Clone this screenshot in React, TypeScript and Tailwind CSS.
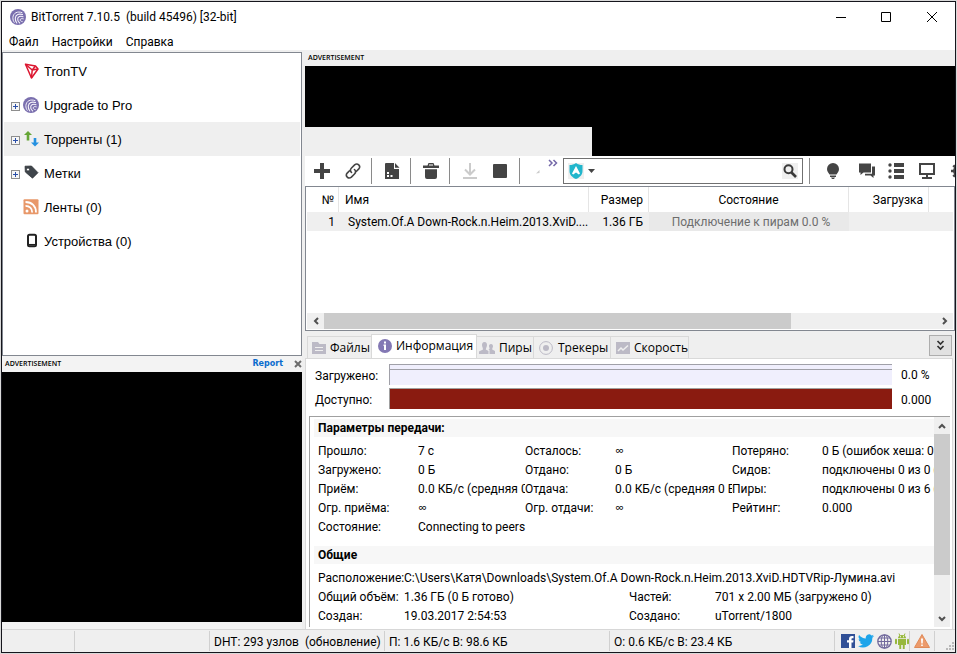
import { ReactNode } from 'react';

const treeItems = [
  { label: 'TronTV', icon: <TronIcon />, expandable: false, active: false },
  { label: 'Upgrade to Pro', icon: <BitTorrentIcon />, expandable: true, active: false },
  { label: 'Торренты (1)', icon: <TransferIcon />, expandable: true, active: true },
  { label: 'Метки', icon: <TagIcon />, expandable: true, active: false },
  { label: 'Ленты (0)', icon: <FeedIcon />, expandable: false, active: false },
  { label: 'Устройства (0)', icon: <DeviceIcon />, expandable: false, active: false },
];

const transferRows = [
  ['Прошло:', '7 с', 'Осталось:', '∞', 'Потеряно:', '0 Б (ошибок хеша: 0'],
  ['Загружено:', '0 Б', 'Отдано:', '0 Б', 'Сидов:', 'подключены 0 из 0 ('],
  ['Приём:', '0.0 КБ/с (средняя 0', 'Отдача:', '0.0 КБ/с (средняя 0 Б/', 'Пиры:', 'подключены 0 из 6 ('],
  ['Огр. приёма:', '∞', 'Огр. отдачи:', '∞', 'Рейтинг:', '0.000'],
];

function BitTorrentIcon() {
  return (
    <svg className="w-4 h-4 shrink-0" viewBox="0 0 16 16" fill="none">
      <circle cx="8" cy="8" r="8" fill="#7a6fae" />
      <g stroke="#f4f2fa" strokeLinecap="round">
        <path d="M12 3.600C7.500 1.800 3.200 4 2.900 8.500c-.1 2 .4 3.500 1.300 4.800" strokeWidth="1" />
        <path d="M12.500 5.600C9 4.300 5.700 5.700 5.300 9c-.2 2 .4 3.700 1.500 5" strokeWidth="1.100" />
        <path d="M13 7.700c-2.500-.9-5-.1-5.300 2.100-.2 1.700.6 3.200 2 4.200" strokeWidth="1.100" />
        <path d="M13.300 9.800c-1.700-.5-3-.1-3.100 1-.1 1 .8 1.700 2 1.800" strokeWidth="1" />
      </g>
    </svg>
  );
}

function TronIcon() {
  return (
    <svg className="w-4 h-4 shrink-0" viewBox="0 0 16 16" fill="none" stroke="#dc1630" strokeWidth="1.500" strokeLinejoin="round">
      <path d="M2.500 1.200 12.500 3 15 6 8.500 15Z" />
      <path d="M2.500 1.200 9.200 7 8.500 15M9.200 7 15 6M9.200 7 12.500 3" />
    </svg>
  );
}

function TransferIcon() {
  return (
    <svg className="w-4 h-4 shrink-0" viewBox="0 0 16 16">
      <path d="M5 0 9 4H6.300V9.500H3.700V4H1Z" fill="#66a636" />
      <path d="M12 15.500 8 11.500h2.700V7h2.600v4.500H16Z" fill="#2490e0" />
    </svg>
  );
}

function TagIcon() {
  return (
    <svg className="w-4 h-4 shrink-0" viewBox="0 0 16 16">
      <path fillRule="evenodd" d="M2 1.200 8.500 1l6.500 6.700-5.500 5.500L2.300 7ZM5 3a1.500 1.500 0 1 0 0 3 1.500 1.500 0 0 0 0-3Z" fill="#3f454b" stroke="#2b2f33" strokeWidth=".7" />
    </svg>
  );
}

function FeedIcon() {
  return (
    <svg className="w-4 h-4 shrink-0" viewBox="0 0 16 16" fill="none" stroke="#fff" strokeWidth="1.800">
      <rect x=".5" y=".3" width="15" height="15" rx="1" fill="#e8986a" stroke="none" />
      <circle cx="4" cy="12" r="1.500" fill="#fff" stroke="none" />
      <path d="M2.500 6.800c4 0 6.700 2.700 6.700 6.700M2.500 3c6.500 0 10.500 4 10.500 10.500" />
    </svg>
  );
}

function DeviceIcon() {
  return (
    <svg className="w-4 h-4 shrink-0" viewBox="0 0 16 16" fill="none">
      <rect x="5" y="1.800" width="8" height="11.400" rx="1.500" stroke="#222" strokeWidth="2" />
      <path d="M6 11.700h6" stroke="#222" strokeWidth="1.500" />
    </svg>
  );
}

function Expander() {
  return (
    <svg className="w-[9px] h-[9px]" viewBox="0 0 9 9" fill="none">
      <rect x=".5" y=".5" width="8" height="8" fill="#f6f6f6" stroke="#8e8e8e" />
      <path d="M2 4.500h5M4.500 2v5" stroke="#2b4fa8" />
    </svg>
  );
}

function ToolButton({ title, className, children }: { title: string; className: string; children: ReactNode }) {
  return (
    <button type="button" title={title} className={`flex h-full shrink-0 items-center justify-center ${className}`}>
      {children}
    </button>
  );
}

function Divider() {
  return <div className="h-[26px] w-px shrink-0 bg-[#8a8a8a]" />;
}

function Chevron({ d }: { d: string }) {
  return (
    <svg className="w-2 h-2" viewBox="0 0 8 8" fill="none" stroke="#505050" strokeWidth="2">
      <path d={d} />
    </svg>
  );
}

function Toolbar() {
  return (
    <div className="flex h-[30px] shrink-0 items-center overflow-hidden bg-white pl-px">
      <ToolButton title="Добавить торрент" className="w-8">
        <svg className="w-4 h-4" viewBox="0 0 16 16" stroke="#444" strokeWidth="4"><path d="M8 0v16M0 8h16" /></svg>
      </ToolButton>
      <ToolButton title="Добавить по ссылке" className="w-8 pr-[2px]">
        <svg className="w-4 h-4" viewBox="0 0 16 16" fill="none" stroke="#444" strokeWidth="1.600" strokeLinecap="round">
          <path d="M6.500 9.500C5 8 5.200 6.300 6.500 5L9.600 1.900c3-2.500 6.600 1.200 4.200 4L11.500 8.200" />
          <path d="M9.500 6.500C11 8 10.800 9.700 9.500 11l-3.100 3.100c-3 2.500-6.600-1.200-4.200-4L4.500 7.800" />
        </svg>
      </ToolButton>
      <div className="ml-px"><Divider /></div>
      <ToolButton title="Создать торрент" className="w-[38px] pl-[2px]">
        <svg className="w-4 h-4" viewBox="0 0 16 16">
          <path d="M2 0h8v6h5v10H1V1a1 1 0 0 1 1-1Z" fill="#444" />
          <path d="M11 0 15.500 4.800H11Z" fill="#444" />
          <path d="M3 9h2v2H3zM3 12h2v2H3zM6.500 12h2v2h-2z" fill="#fff" />
        </svg>
      </ToolButton>
      <Divider />
      <ToolButton title="Удалить" className="w-[38px] pl-[2px]">
        <svg className="w-4 h-4" viewBox="0 0 16 16" fill="#444">
          <path d="M0 2.500h4.500L5.500 0h5l1 2.500H16V5H0ZM6 1.500v1h4v-1ZM2 6.300h12V14a2 2 0 0 1-2 2H4a2 2 0 0 1-2-2Z" fillRule="evenodd" />
        </svg>
      </ToolButton>
      <Divider />
      <ToolButton title="Запустить" className="w-10">
        <svg className="w-4 h-4" viewBox="0 0 16 16" fill="none" stroke="#cbcbcb" strokeWidth="2"><path d="M8 0v11M3 6.500l5 5 5-5M1 15h14" /></svg>
      </ToolButton>
      <ToolButton title="Остановить" className="w-[29px] pr-[10px]">
        <svg className="w-[14px] h-[14px]" viewBox="0 0 14 14"><rect width="14" height="14" rx="1" fill="#444" /></svg>
      </ToolButton>
      <Divider />
      <ToolButton title="Ещё" className="w-[43px]">
        <svg className="w-[43px] h-[30px]" viewBox="0 0 43 30" fill="none">
          <path d="M16 17.500 19.500 14v3Z" fill="#cbcbcb" />
          <path d="m29 4 3 3-3 3M33.500 4l3 3-3 3" stroke="#7468a8" strokeWidth="1.500" />
        </svg>
      </ToolButton>
      <div className="flex h-[26px] min-w-0 flex-1 items-center border border-[#707070] pl-1 pr-1">
        <button type="button" title="Поисковая система" className="flex h-4 items-center gap-1">
          <svg className="w-4 h-4" viewBox="0 0 16 16">
            <path d="M0 0h16v16H0z" fill="#efefef" />
            <path d="M8 0c2 1.400 4 2 6.500 2v6c0 4-3 6.500-6.500 8-3.500-1.500-6.500-4-6.500-8V2C4 2 6 1.400 8 0Z" fill="#22b6cc" />
            <path d="m8 3 4 7.500-1.200 1L8 9.500l-2.800 2-1.200-1Z" fill="#fff" />
          </svg>
          <svg className="w-[7px] h-1" viewBox="0 0 7 4"><path d="M0 0h7L3.500 4Z" fill="#444" /></svg>
        </button>
        <input type="text" aria-label="Поиск" className="h-5 min-w-0 flex-1 px-2 text-[12px] outline-none" />
        <button type="button" title="Найти" className="flex h-4 w-4 shrink-0 items-center justify-center bg-[#efefef]">
          <svg className="w-[14px] h-[14px]" viewBox="0 0 14 14" fill="none" stroke="#3a3a3a">
            <circle cx="5.500" cy="5.200" r="4" strokeWidth="2" />
            <path d="m8.500 8.500 4.500 4.500" strokeWidth="2.600" />
          </svg>
        </button>
      </div>
      <div className="flex h-full w-[152px] shrink-0 items-center overflow-hidden pl-[6px]">
        <Divider />
        <div className="w-[7px] shrink-0" />
        <ToolButton title="Подсказка" className="w-[31px]">
          <svg className="w-3 h-4" viewBox="0 0 12 16" fill="#444">
            <path d="M6 0a6 6 0 0 1 6 6c0 2.500-1.500 3.500-2.500 5.500h-7C1.500 9.500 0 8.500 0 6a6 6 0 0 1 6-6ZM3 12.500h6V14H3zM4 14.500h4L7 16H5Z" />
          </svg>
        </ToolButton>
        <ToolButton title="Чат" className="w-8 pl-[5px]">
          <svg className="w-4 h-4" viewBox="0 0 16 16" fill="#444">
            <path d="M0 .5h12v9H4.500L1.500 12V9.500H0Z" />
            <path d="M13 3.500h3v9h-1.500V15l-3-2.500H6V10.700h7Z" />
          </svg>
        </ToolButton>
        <ToolButton title="Список" className="w-[31px]">
          <svg className="w-4 h-4" viewBox="0 0 16 16" fill="#444">
            <path d="M6 0h10v4H6zM6 6h10v4H6zM6 12h10v4H6z" />
            <circle cx="2" cy="2" r="1.700" /><circle cx="2" cy="8" r="1.700" /><circle cx="2" cy="14" r="1.700" />
          </svg>
        </ToolButton>
        <ToolButton title="Удалённый доступ" className="w-[31px]">
          <svg className="w-4 h-4" viewBox="0 0 16 16" fill="none" stroke="#444" strokeWidth="2">
            <path d="M1 1h14v10H1z" /><path d="M3 15h10M8 11v4" />
          </svg>
        </ToolButton>
        <ToolButton title="Настройки" className="w-[31px] pl-[3px]">
          <svg className="w-4 h-4" viewBox="0 0 16 16" fill="none" stroke="#444">
            <circle cx="8" cy="8" r="4.500" strokeWidth="3" />
            <path d="M8 0v3M8 13v3M0 8h3M13 8h3M2.300 2.300l2 2M11.700 11.700l2 2M2.300 13.700l2-2M11.700 4.300l2-2" strokeWidth="2.500" />
          </svg>
        </ToolButton>
      </div>
    </div>
  );
}

function TorrentList() {
  return (
    <div className="flex min-h-0 flex-1 flex-col border border-[#828790] bg-white p-px pt-0">
      <table className="w-full table-fixed border-separate border-spacing-0 text-[12px] leading-[16px]">
        <colgroup>
          <col className="w-8" />
          <col className="w-[250px]" />
          <col className="w-[60px]" />
          <col className="w-[200px]" />
          <col className="w-20" />
          <col />
        </colgroup>
        <thead>
          <tr className="h-[25px]">
            <th className="border-r border-[#e5e5e5] pr-1 text-right font-normal">№</th>
            <th className="border-r border-[#e5e5e5] pl-[6px] text-left font-normal">Имя</th>
            <th className="border-r border-[#e5e5e5] pr-[5px] text-right font-normal">Размер</th>
            <th className="border-r border-[#e5e5e5] text-center font-normal">Состояние</th>
            <th className="border-r border-[#e5e5e5] pr-[5px] text-right font-normal">Загрузка</th>
            <th />
          </tr>
        </thead>
        <tbody>
          <tr className="h-[19px] bg-[#efefef]">
            <td className="pr-1 text-right">1</td>
            <td className="whitespace-nowrap pl-[9px]">System.Of.A Down-Rock.n.Heim.2013.XviD....</td>
            <td className="whitespace-nowrap pr-[6px] text-right">1.36 ГБ</td>
            <td className="bg-[#e9e9e9] pl-1 text-center text-[#6d6d6d]">Подключение к пирам 0.0 %</td>
            <td />
            <td />
          </tr>
        </tbody>
      </table>
      <div className="mt-auto flex h-4 shrink-0 items-center bg-[#efefef]">
        <div className="flex w-[17px] justify-center"><Chevron d="M6 1 3 4l3 3" /></div>
        <div className="h-full w-[467px] bg-[#cbcbcb]" />
        <div className="ml-auto flex w-[17px] justify-center"><Chevron d="M2 1l3 3-3 3" /></div>
      </div>
    </div>
  );
}

function Tab({ label, icon, selected, className }: { label: string; icon: ReactNode; selected?: boolean; className: string }) {
  return (
    <button type="button" role="tab" aria-selected={!!selected} className={`flex items-center whitespace-nowrap border-[#d9d9d9] font-['Open_Sans',sans-serif] text-[12px] leading-[16px] ${className}`}>
      {icon}
      {label}
    </button>
  );
}

function Tabs() {
  return (
    <div className="flex h-[27px] shrink-0 items-end pl-[2px] pr-[3px]">
      <div role="tablist" className="flex flex-1 items-end">
        <Tab
          label="Файлы"
          className="h-[22px] w-[64px] gap-[4px] border-l border-t pl-1"
          icon={
            <svg className="w-[14px] h-3 shrink-0" viewBox="0 0 14 12">
              <path d="M0 0h6l1.500 2H14v10H0Z" fill="#bcbac6" /><path d="M3 5.500h8M3 8.500h8" stroke="#efefef" strokeWidth="1.200" />
            </svg>
          }
        />
        <Tab
          label="Информация"
          selected
          className="-mb-px h-[25px] w-[106px] gap-[4px] border-x border-t bg-white pl-[6px] pb-[2px]"
          icon={
            <svg className="w-[14px] h-[14px] shrink-0" viewBox="0 0 14 14">
              <circle cx="7" cy="7" r="7" fill="#8378b4" /><path d="M6 2.500h2v2H6zM5.500 5.500H8V11H6V7h-.5Z" fill="#fff" />
            </svg>
          }
        />
        <Tab
          label="Пиры"
          className="h-[22px] w-[57px] gap-[4px] border-t border-r pl-[2px]"
          icon={
            <svg className="w-4 h-3 shrink-0" viewBox="0 0 16 12" fill="#bcbac6">
              <path d="M5.500 0C7.500 0 8 1.500 8 3S7 6 6.800 7.500L9.500 9v3H0V9.500L4 7.500C4 6 3 4.500 3 3s.5-3 2.500-3Z" />
              <path d="M12 2c1.500 0 2 1 2 2.300 0 1.200-.8 2-.8 3.200L16 9v3h-5.500V8L9.500 7.300 10.800 6.500C10.300 5.500 10 5 10 4.200 10 3 10.500 2 12 2Z" />
            </svg>
          }
        />
        <Tab
          label="Трекеры"
          className="h-[22px] w-[77px] gap-[5px] border-t border-r pl-[5px]"
          icon={
            <svg className="w-[14px] h-[14px] shrink-0" viewBox="0 0 14 14" fill="none">
              <circle cx="7" cy="7" r="6.400" stroke="#bcbac6" /><circle cx="7" cy="7" r="3" fill="#bcbac6" />
            </svg>
          }
        />
        <Tab
          label="Скорость"
          className="h-[22px] w-[78px] gap-[4px] border-t border-r pl-[5px]"
          icon={
            <svg className="w-[14px] h-3 shrink-0" viewBox="0 0 14 12" fill="none">
              <rect width="14" height="12" fill="#bcbac6" /><path d="m2 9 3-3 2 2 5-4.500" stroke="#efefef" strokeWidth="1.500" />
            </svg>
          }
        />
      </div>
      <button type="button" title="Свернуть" className="mb-[2px] flex h-[21px] w-[23px] items-center justify-center border border-[#adadad] bg-[#e1e1e1]">
        <svg className="w-[9px] h-[11px]" viewBox="0 0 9 11" fill="none" stroke="#333" strokeWidth="1.700"><path d="m1.500 1 3 3 3-3M1.500 6l3 3 3-3" /></svg>
      </button>
    </div>
  );
}

function InfoPanel() {
  return (
    <div className="mr-[2px] flex h-[271px] shrink-0 flex-col border border-b-0 border-[#d9d9d9] bg-white pb-[2px] pt-[5px] text-[12px] leading-[16px]">
      <div className="flex h-[21px] shrink-0 items-center pl-[9px]">
        <div className="w-[74px] pt-[2px]">Загружено:</div>
        <div className="h-full flex-1 border-l border-t border-[#a0a0a8] bg-[#f0effd] pt-1">
          <div className="h-px bg-[#a0a0a8]" />
        </div>
        <div className="w-[60px] pl-[9px]">0.0 %</div>
      </div>
      <div className="mt-[3px] flex h-[21px] shrink-0 items-center pl-[9px]">
        <div className="w-[74px] pt-[2px]">Доступно:</div>
        <div className="h-full flex-1 border-l border-t border-[#a0a0a0] bg-[#8a1b10]" />
        <div className="w-[60px] pl-[9px] pt-[2px]">0.000</div>
      </div>
      <div className="ml-[3px] mr-[2px] mt-[7px] flex min-h-0 flex-1 border-l border-t border-[#a0a0a0]">
        <div className="min-w-0 flex-1 overflow-hidden pl-1 pt-[2px]">
          <h2 className="h-[18px] bg-[#f7f7f7] pl-1 font-bold leading-[18px]">Параметры передачи:</h2>
          <table className="mt-1 w-full table-fixed border-collapse">
            <colgroup>
              <col className="w-[104px]" />
              <col className="w-[107px]" />
              <col className="w-[90px]" />
              <col className="w-[117px]" />
              <col className="w-[90px]" />
              <col />
            </colgroup>
            <tbody>
              {transferRows.map((row) => (
                <tr key={row[0]} className="h-[19px]">
                  {row.map((cell, i) =>
                    i % 2 === 0 ? (
                      <th key={i} scope="row" className="whitespace-nowrap text-left font-normal first:pl-1">{cell}</th>
                    ) : (
                      <td key={i} className={cell === '∞' ? "font-['Open_Sans',sans-serif]" : 'overflow-hidden whitespace-nowrap'}>{cell}</td>
                    )
                  )}
                </tr>
              ))}
              <tr className="h-[19px]">
                <th scope="row" className="pl-1 text-left font-normal">Состояние:</th>
                <td colSpan={5}>Connecting to peers</td>
              </tr>
            </tbody>
          </table>
          <h2 className="mt-[10px] h-[18px] bg-[#f7f7f7] pl-1 font-bold leading-[18px]">Общие</h2>
          <table className="mt-1 w-full table-fixed border-collapse">
            <colgroup>
              <col className="w-[90px]" />
              <col className="w-[225px]" />
              <col className="w-[86px]" />
              <col />
            </colgroup>
            <tbody>
              <tr className="h-[19px]">
                <th scope="row" className="whitespace-nowrap pl-1 text-left font-normal">Расположение:</th>
                <td colSpan={3} className="whitespace-nowrap">C:\Users\Катя\Downloads\System.Of.A Down-Rock.n.Heim.2013.XviD.HDTVRip-Лумина.avi</td>
              </tr>
              <tr className="h-[19px]">
                <th scope="row" className="whitespace-nowrap pl-1 text-left font-normal">Общий объём:</th>
                <td>1.36 ГБ (0 Б готово)</td>
                <th scope="row" className="text-left font-normal">Частей:</th>
                <td className="whitespace-nowrap">701 x 2.00 МБ (загружено 0)</td>
              </tr>
              <tr className="h-[19px]">
                <th scope="row" className="pl-1 text-left font-normal">Создан:</th>
                <td>19.03.2017 2:54:53</td>
                <th scope="row" className="text-left font-normal">Создано:</th>
                <td>uTorrent/1800</td>
              </tr>
            </tbody>
          </table>
        </div>
        <div className="flex w-4 shrink-0 flex-col items-center bg-[#efefef]">
          <div className="flex h-[17px] items-center"><Chevron d="m1 6 3-3 3 3" /></div>
          <div className="h-[141px] w-full bg-[#cbcbcb]" />
          <div className="mt-auto flex h-[17px] items-center"><Chevron d="m1 2 3 3 3-3" /></div>
        </div>
      </div>
    </div>
  );
}

function StatusBar() {
  return (
    <div className="flex h-[23px] shrink-0 items-center border-t border-[#d7d7d7] bg-[#efefef] text-[12px] leading-[16px]">
      <div className="h-5 w-[73px] border-r border-[#d0d0d0]" />
      <div className="h-5 w-[135px] border-r border-[#d0d0d0]" />
      <div className="h-5 w-[175px] whitespace-pre border-r border-[#d0d0d0] pl-1 pt-[3px]">DHT: 293 узлов  (обновление)</div>
      <div className="h-5 w-[225px] border-r border-[#d0d0d0] pl-1 pt-[3px]">П: 1.6 КБ/с В: 98.6 КБ</div>
      <div className="h-5 flex-1 border-r border-[#d0d0d0] pl-1 pt-[3px]">О: 0.6 КБ/с В: 23.4 КБ</div>
      <div className="flex h-5 w-[75px] items-center justify-between border-r border-[#d0d0d0] pl-[6px]">
        <a href="#facebook" title="Facebook">
          <svg className="w-[14px] h-[14px]" viewBox="0 0 14 14">
            <rect width="14" height="14" fill="#304f96" />
            <path d="M8 14V8.500H6V6.300h2V5c0-2 1-3 3-3h1.500v2.200h-1c-.8 0-1 .3-1 1v1.100h2l-.3 2.200h-1.700V14Z" fill="#fff" />
          </svg>
        </a>
        <a href="#twitter" title="Twitter">
          <svg className="w-4 h-4" viewBox="1 2 22 20">
            <path fill="#1da4ea" d="M23 5.100a9 9 0 0 1-2.600.7 4.500 4.500 0 0 0 2-2.500 9 9 0 0 1-2.900 1.100A4.500 4.500 0 0 0 11.800 8.500 12.800 12.800 0 0 1 2.500 3.800a4.500 4.500 0 0 0 1.400 6 4.500 4.500 0 0 1-2-.6 4.500 4.500 0 0 0 3.600 4.500 4.500 4.500 0 0 1-2 .1 4.500 4.500 0 0 0 4.200 3.100A9 9 0 0 1 1 18.800 12.800 12.800 0 0 0 20.700 7.500 9 9 0 0 0 23 5.100Z" />
          </svg>
        </a>
        <a href="#web" title="BitTorrent">
          <svg className="w-[15px] h-[15px]" viewBox="0 0 15 15" fill="none" stroke="#70689c">
            <circle cx="7.500" cy="7.500" r="6.700" strokeWidth="1.300" /><ellipse cx="7.500" cy="7.500" rx="3.300" ry="6.700" />
            <path d="M7.500 1v13M1 7.500h13M2 4h11M2 11h11" />
          </svg>
        </a>
        <a href="#android" title="Android">
          <svg className="w-[14px] h-4" viewBox="0 0 14 16" fill="#97b83c">
            <path d="M3 5c0-4 8-4 8 0Z" /><path d="M4 .5 5 3M10 .5 9 3" stroke="#97b83c" />
            <path d="M3 5.700h8V12H9.700v4H7.800v-4H6.200v4H4.300v-4H3Z" />
            <rect x="0" y="5.700" width="2" height="5.500" rx="1" /><rect x="12" y="5.700" width="2" height="5.500" rx="1" />
            <path d="M5 3.200h1v1H5zM8 3.200h1v1H8z" fill="#fff" />
          </svg>
        </a>
      </div>
      <div className="flex h-5 w-[25px] items-center justify-center border-r border-[#d0d0d0]">
        <svg className="w-4 h-[14px]" viewBox="0 0 16 14">
          <path d="M8 .5 15.500 13.500H.5Z" fill="#ec9b6c" stroke="#e08a58" strokeLinejoin="round" />
          <path d="M7 4.500h2L8.700 9.500H7.300ZM7.200 10.500h1.600V12H7.200z" fill="#fff" />
        </svg>
      </div>
      <div className="flex h-full w-5 items-end justify-end pb-[2px] pr-px">
        <svg className="w-2 h-2" viewBox="0 0 8 8" fill="#b8b8b8"><path d="M6 0h2v2H6zM3 3h2v2H3zM6 3h2v2H6zM0 6h2v2H0zM3 6h2v2H3zM6 6h2v2H6z" /></svg>
      </div>
    </div>
  );
}

export default function App() {
  return (
    <div className="h-screen bg-[#d9d9d9] p-px font-[Roboto,sans-serif] text-black">
      <div className="flex h-full flex-col overflow-hidden border border-[#15151c] bg-[#efefef]">
        {/* заголовок окна */}
        <header className="flex h-[30px] shrink-0 items-center bg-white pl-2">
          <BitTorrentIcon />
          <h1 className="whitespace-pre pl-[5px] text-[12px] leading-[16px]">BitTorrent 7.10.5  (build 45496) [32-bit]</h1>
          <div className="ml-auto flex h-full">
            <button type="button" title="Свернуть" className="flex w-[46px] items-center justify-center">
              <svg className="w-[10px] h-[10px]" viewBox="0 0 10 10" stroke="#000"><path d="M0 5.500h10" /></svg>
            </button>
            <button type="button" title="Развернуть" className="flex w-11 items-center justify-center">
              <svg className="w-[10px] h-[10px]" viewBox="0 0 10 10" fill="none" stroke="#000"><path d="M.5.500h9v9h-9z" /></svg>
            </button>
            <button type="button" title="Закрыть" className="flex w-[47px] items-center justify-center">
              <svg className="w-[10px] h-[10px]" viewBox="0 0 10 10" stroke="#000"><path d="m0 0 10 10M10 0 0 10" /></svg>
            </button>
          </div>
        </header>

        {/* меню */}
        <nav className="flex h-[18px] shrink-0 items-center gap-[13px] bg-white pl-[7px] pt-px text-[12px] leading-[16px]">
          <button type="button">Файл</button>
          <button type="button">Настройки</button>
          <button type="button">Справка</button>
        </nav>

        <div className="flex min-h-0 flex-1">
          {/* левая колонка */}
          <aside className="flex w-[300px] shrink-0 flex-col pt-[2px]">
            <ul className="min-h-0 flex-1 overflow-hidden border border-[#828790] bg-white p-px font-['Liberation_Sans',Arial,sans-serif] text-[13px] leading-[20px]">
              {treeItems.map((item) => (
                <li key={item.label} className={item.active ? 'flex h-[34px] items-center bg-[#efefef] pl-[7px]' : 'flex h-[34px] items-center pl-[7px]'}>
                  <span className="flex w-[12px] pt-[2px]">{item.expandable && <Expander />}</span>
                  {item.icon}
                  <span className="pl-[5px] pt-[2px]">{item.label}</span>
                </li>
              ))}
            </ul>
            <div className="flex h-4 shrink-0 items-center bg-[#f3f3f3] pl-[3px]">
              <span className="font-['Open_Sans',sans-serif] text-[7px] font-semibold leading-[10px]">ADVERTISEMENT</span>
              <a href="#report" className="ml-auto font-['DejaVu_Sans',sans-serif] text-[8px] font-bold leading-[10px] text-[#0a6cce]">Report</a>
              <button type="button" title="Закрыть рекламу" className="ml-[11px]">
                <svg className="w-[8px] h-[8px]" viewBox="0 0 8 8" stroke="#6c6c6c" strokeWidth="2"><path d="m1 1 6 6M7 1 1 7" /></svg>
              </button>
            </div>
            <div className="h-[250px] shrink-0 bg-black" />
            <div className="h-[7px] shrink-0 bg-[#f3f3f3]" />
          </aside>

          {/* правая колонка */}
          <main className="ml-[3px] flex min-w-0 flex-1 flex-col">
            <div className="flex h-4 shrink-0 items-center pl-[3px] font-['Open_Sans',sans-serif] text-[7px] font-semibold leading-[10px]">ADVERTISEMENT</div>
            <div className="h-[61px] shrink-0 bg-black" />
            <div className="flex h-[29px] shrink-0">
              <div className="w-[287px]" />
              <div className="flex-1 bg-black" />
            </div>
            <Toolbar />
            <TorrentList />
            <Tabs />
            <InfoPanel />
          </main>
        </div>

        <StatusBar />
      </div>
    </div>
  );
}
